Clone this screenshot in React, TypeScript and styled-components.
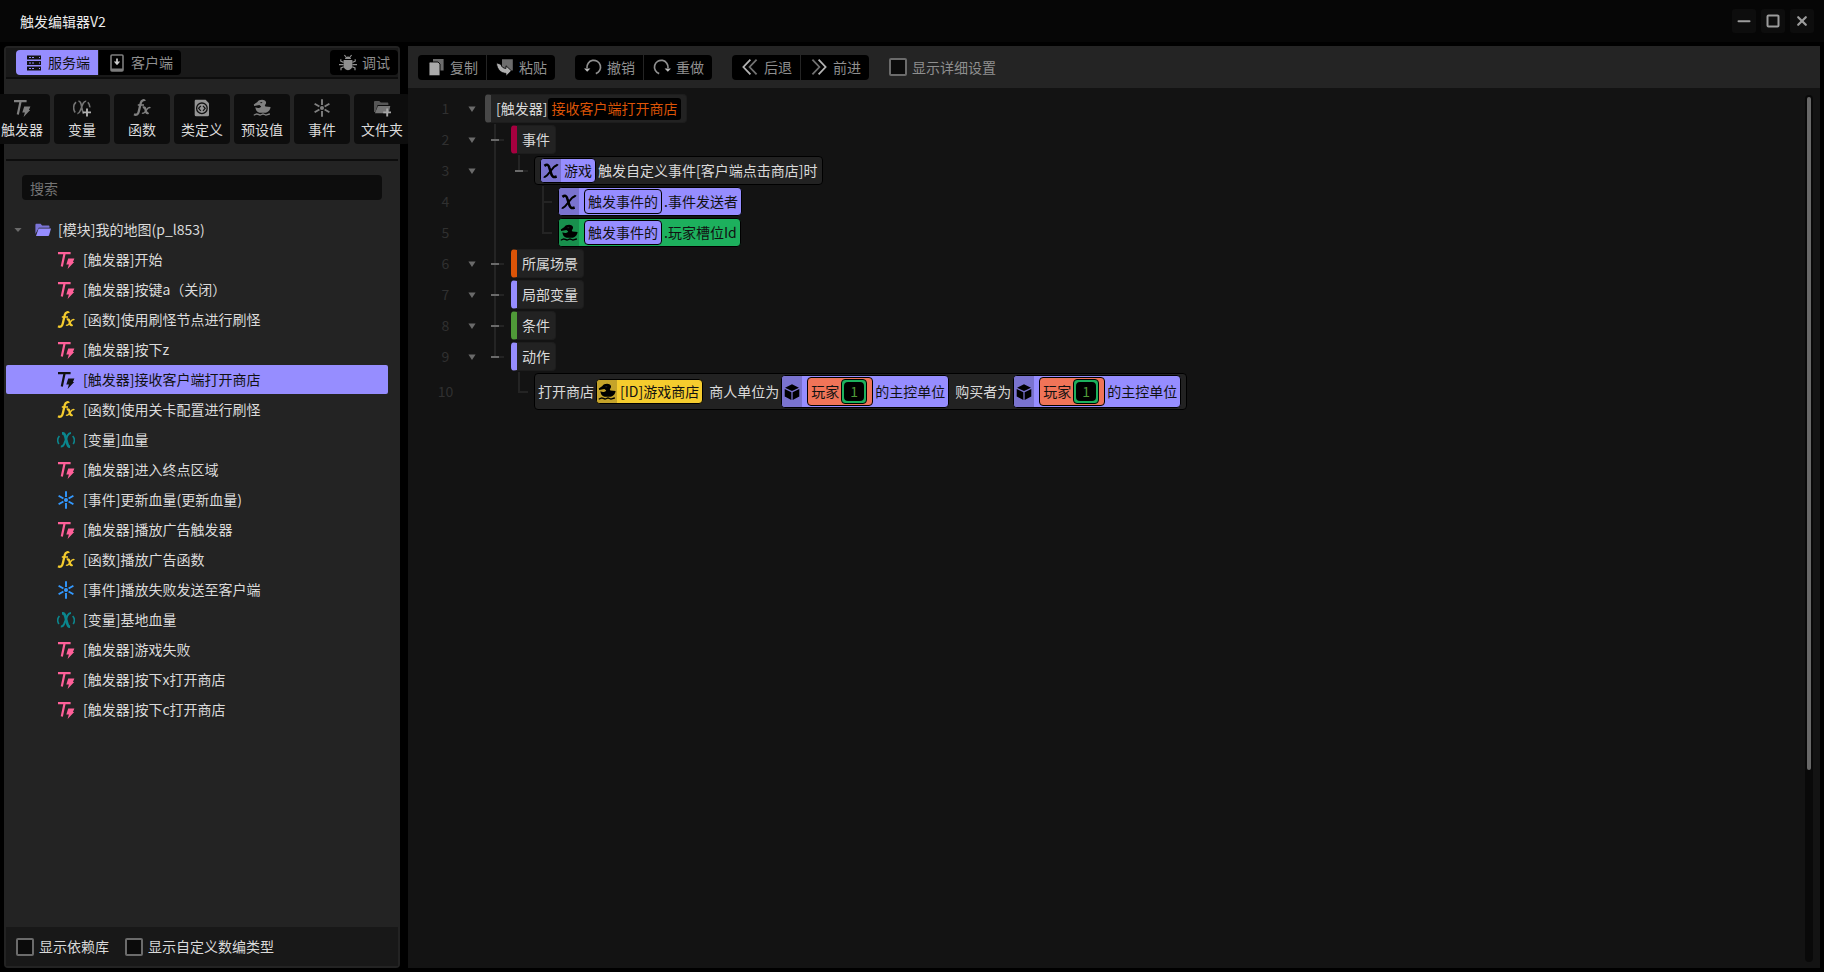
import React from 'react';
import styled, { createGlobalStyle, css } from 'styled-components';

const color = {
  accent: '#968dff',
  accentDark: '#7a73cf',
  pink: '#ff6099',
  yellow: '#f5cc2e',
  yellowDark: '#c4a32a',
  teal: '#0b868d',
  blue: '#3399ff',
  orange: '#dc5407',
  crimson: '#a5003f',
  grass: '#4f9a38',
  green: '#1db05d',
  greenDark: '#18904d',
  coral: '#f07458',
  text: '#dadada',
  muted: '#8f8f8f',
};

const Global = createGlobalStyle`
  * { box-sizing: border-box; }
  body {
    margin: 0;
    background: #000;
    color: ${color.text};
    font: 14px/19px "Noto Sans CJK SC", "Noto Sans", sans-serif;
  }
  button, input { font: inherit; color: inherit; }
  button { border: 0; padding: 0; cursor: pointer; }
  svg { display: block; flex: none; }
`;

/* ---------- icons ---------- */

type IconName =
  | 'trigger' | 'function' | 'variable' | 'variableAdd' | 'event' | 'class' | 'preset'
  | 'folderAdd' | 'folder' | 'server' | 'client' | 'bug' | 'copy' | 'paste' | 'undo'
  | 'redo' | 'back' | 'forward' | 'chi' | 'cube' | 'minus' | 'square' | 'close';

const duck = (
  <>
    <path
      d="M.8 5.400 4.400 3C5.400.9 9.600.2 11.800 1.500c1.800 1.200 1.600 3.400 0 4.700l.6 1.300 5.200.6c-.2 2.500-1.800 4.900-4.600 5.700H6.600C3.900 13 2.400 10.900 2.400 8.300c2.200 1.100 4.900.9 5.800-.8L6.400 6 1.200 7Z"
      fill="currentColor"
    />
    <path d="M.8 16c1.400 0 1.700-1 3-1s1.800 1 3.200 1 1.700-1 3-1 1.700 1 3 1 1.700-1 3.900-1" fill="none" stroke="currentColor" strokeWidth="1.400" />
    <path d="M7.400 3.600h1.800" stroke="#1c1c1c" strokeWidth="1.100" />
  </>
);

const spark = (
  <>
    <path d="M9 .3v5.600M9 12.100v5.600M1.600 4.700l4.800 2.800M11.600 10.500l4.800 2.800M16.400 4.700l-4.800 2.800M6.400 10.500l-4.800 2.800" fill="none" stroke="currentColor" strokeWidth="1.900" />
    <circle cx="9" cy="9" r="2" fill="currentColor" />
  </>
);

const drawings: Record<IconName, React.ReactNode> = {
  trigger: (
    <>
      <path d="M1 2.200h12.600M7.600 2.200 4.800 15.400" fill="none" stroke="currentColor" strokeWidth="2.200" />
      <path d="M11.200 7.600h6.200l-1.500 3.300h1.300l-6.600 7.100 1.300-4.500H9.300Z" fill="currentColor" />
    </>
  ),
  function: (
    <>
      <path d="M11.800 2c-.4-1.200-3.100-1.300-3.900 1.600L5.700 12.800c-.5 2.500-2.500 3.600-4.700 2.500" fill="none" stroke="currentColor" strokeWidth="2.300" />
      <path d="M4.800 6h6.200" stroke="currentColor" strokeWidth="1.600" />
      <path d="M9.800 8.600c1.900-.9 2.500.5 2.900 2.600.4 2.400 1 3.600 2.800 2.500" fill="none" stroke="currentColor" strokeWidth="2.300" />
      <path d="M17.400 8.800c-1.400-.9-2.800.4-4.200 2.500-1.300 2-2.700 3.700-4.200 2.700" fill="none" stroke="currentColor" strokeWidth="1.500" />
    </>
  ),
  variable: (
    <>
      <path d="M5 2.400h.9c1.400 0 1.800.9 2.400 3l1.600 6c.6 2.300 1.100 4.200 2.500 4.200h.7" fill="none" stroke="currentColor" strokeWidth="2.700" />
      <path d="M14 2.100c-1.500 0-2.600.9-3.500 2.400L7.300 12.700c-.9 2.100-1.900 3.100-3.500 2.900" fill="none" stroke="currentColor" strokeWidth="2" />
      <path d="M2.400 5C.5 7.200.4 10.600 1.900 13M15.700 5c1.900 2.200 2 5.600.5 8" fill="none" stroke="currentColor" strokeWidth="1.600" />
    </>
  ),
  variableAdd: (
    <>
      <path d="M5.400 2.200c1.700-.2 2.200.8 2.700 3l1.300 6.200c.3 1.500.7 2.700 1.200 3.300M13.200 2.300c-1.300-.2-2.300.7-3.100 2.200l-2.900 7.300c-.8 1.900-1.500 2.900-2.800 2.700M3 3.200C.1 5.900-.1 10.400 2.200 13.400M14.800 3.200c1.500 1.500 2.100 3.300 2 5.200" fill="none" stroke="#747474" strokeWidth="1.600" />
      <path d="M14 9.400v8M10 13.400h8" stroke="#b0b0b0" strokeWidth="1.900" />
    </>
  ),
  event: spark,
  class: (
    <>
      <path d="M3 .8h9.600L16 4.200v11.600a1.500 1.500 0 0 1-1.500 1.500H3.200a1.500 1.500 0 0 1-1.500-1.500V2.200C1.700 1.300 2.200.8 3 .8Z" fill="#949494" />
      <circle cx="8.900" cy="9.300" r="5.300" fill="none" stroke="#111" strokeWidth="1.300" />
      <path d="M7.800 6.800 5.600 9.300l2.200 2.500M10 6.800l2.200 2.500-2.200 2.500" fill="none" stroke="#111" strokeWidth="1.200" />
    </>
  ),
  preset: duck,
  folderAdd: (
    <>
      <path d="M1 13V3.200C1 2.400 1.400 2 2.200 2h4l1.600 1.600h6.400c.8 0 1.200.4 1.200 1.200V6H4.600L2.400 13Z" fill="#565656" />
      <path d="M4.900 7h12.400l-1.600 7.300H1.900Z" fill="#747474" />
      <path d="M14.200 9.400v8M10.200 13.400h8" stroke="#a8a8a8" strokeWidth="1.900" />
    </>
  ),
  folder: (
    <>
      <path d="M1.400 13V4c0-.8.4-1.200 1.200-1.200h4l1.500 1.700h6.200c.8 0 1.200.4 1.200 1.200v1H4.800Z" fill="#7a73d6" />
      <path d="M4.600 7.600h12.400l-1.900 6.700c-.1.500-.5.800-1 .8H2Z" fill="currentColor" />
    </>
  ),
  server: (
    <>
      <path d="M2 1.400h14v4.200H2zM2 6.900h14v4.200H2zM2 12.400h14v4.200H2z" fill="currentColor" />
      <path d="M4 3.500h2M7 3.500h2M4 9h2M7 9h2M4 14.500h2M7 14.500h2M14 3.500h1M14 9h1M14 14.500h1" stroke={color.accent} strokeWidth="1" />
    </>
  ),
  client: (
    <>
      <path d="M4 1h10c.7 0 1 .4 1 1v14c0 .7-.3 1-1 1H4c-.6 0-1-.3-1-1V2c0-.6.400-1 1-1Z" fill="none" stroke="#7c7c7c" strokeWidth="1.600" />
      <path d="M3 14.600h12V17H3z" fill="#7c7c7c" />
      <path d="M9 4.600v4" stroke="#ccc" strokeWidth="1.700" />
      <path d="M5.800 7.600h6.400L9 11.200Z" fill="#ccc" />
    </>
  ),
  bug: (
    <>
      <path d="M6 5C6 3.500 7.200 2.600 9 2.600S12 3.500 12 5ZM4.600 6h8.800v5.600c0 2.800-1.800 4.600-4.400 4.600s-4.400-1.800-4.400-4.600Z" fill="currentColor" />
      <path d="M7 3 5.400 1M11 3l1.600-2M4.600 8.400 1.800 7.200V5.200M4.600 10.600H0M4.800 12.800 2 14v2.200M13.400 8.400l2.800-1.200V5.200M13.400 10.600H18M13.200 12.800 16 14v2.200" fill="none" stroke="currentColor" strokeWidth="1.200" />
    </>
  ),
  copy: (
    <>
      <path d="M6 1h10.600v11.600H6z" fill="#6c6c6c" />
      <path d="M3.200 4H11l2 2v11.800H2V5.200C2 4.400 2.400 4 3.200 4Z" fill="#aaa" stroke="#000" strokeWidth=".9" />
    </>
  ),
  paste: (
    <>
      <path d="M6 1.200h10.800v11.400H6z" fill="#6c6c6c" />
      <path d="M.4 4.800 5 6.400c.6 2.600 2.200 3.900 5 4V7.800l5.400 5-5.400 5.400v-2.800C5 15.200 1 11.600.4 4.800Z" fill="#b0b0b0" stroke="#000" strokeWidth=".8" />
    </>
  ),
  undo: (
    <>
      <path d="M3 10A6.800 6.800 0 1 1 11.800 15.600" fill="none" stroke="currentColor" strokeWidth="1.700" />
      <path d="M0 10.400h6.400l-3.200 3.400Z" fill="#bbb" />
    </>
  ),
  redo: (
    <>
      <path d="M15 10A6.800 6.800 0 1 0 6.200 15.600" fill="none" stroke="currentColor" strokeWidth="1.700" />
      <path d="M18 10.400h-6.400l3.200 3.400Z" fill="#bbb" />
    </>
  ),
  back: (
    <>
      <path d="M9.400 1.600 2.400 9l7 7.400" fill="none" stroke="#b4b4b4" strokeWidth="1.800" />
      <path d="M15.600 1.600 8.600 9l7 7.400" fill="none" stroke="#707070" strokeWidth="1.800" />
    </>
  ),
  forward: (
    <>
      <path d="M2.400 1.600 9.400 9l-7 7.400" fill="none" stroke="#707070" strokeWidth="1.800" />
      <path d="M8.600 1.600l7 7.400-7 7.400" fill="none" stroke="#b4b4b4" strokeWidth="1.800" />
    </>
  ),
  chi: (
    <>
      <path d="M1.600 3.200C4.600 1 6.200 2 7 4.800l2.300 7.400c.8 2.900 2.300 4.400 6.100 3" fill="none" stroke="currentColor" strokeWidth="2.900" />
      <path d="M16.600 1.400c-1 1.900-2.900 1.400-4.200 3.100L5 13.400c-1.200 1.500-2.900 1.200-3.700 3.200" fill="none" stroke="currentColor" strokeWidth="2.200" />
    </>
  ),
  cube: (
    <>
      <path d="m9 .2 7.800 3.900L9 8 1.200 4.100ZM.8 5.600l7.500 3.700v8.600L.8 14ZM17.200 5.600l-7.500 3.700v8.600l7.500-3.900Z" fill="currentColor" />
    </>
  ),
  minus: <path d="M3.500 9.200h11" stroke="currentColor" strokeWidth="2" strokeLinecap="round" />,
  square: <rect x="3.500" y="3.500" width="11" height="11" rx="1" fill="none" stroke="currentColor" strokeWidth="2" />,
  close: <path d="m5.200 5.200 7.600 7.600M12.800 5.200l-7.600 7.600" stroke="currentColor" strokeWidth="2.200" strokeLinecap="round" />,
};

const Icon = ({ name, size = 18 }: { name: IconName; size?: number }) => (
  <svg width={size} height={size} viewBox="0 0 18 18" aria-hidden="true">
    {drawings[name]}
  </svg>
);

const Caret = ({ flat }: { flat?: boolean }) => (
  <svg width="8" height="6" viewBox="0 0 8 6" aria-hidden="true">
    <path d={flat ? 'M.4 1h7.200L4 5Z' : 'M.4.400h7.200L4 6Z'} fill="currentColor" />
  </svg>
);

/* ---------- window frame ---------- */

const Window = styled.div`
  min-height: 100vh;
  display: flex;
  flex-direction: column;
`;

const TitleBar = styled.header`
  height: 42px;
  padding: 0 10px 0 20px;
  display: flex;
  align-items: center;
  justify-content: space-between;
  background: #060606;
`;

const Title = styled.h1`
  margin: 0;
  font-size: 14px;
  font-weight: 400;
  color: #ececec;
`;

const WindowControls = styled.div`
  display: flex;
  gap: 5px;
`;

const WindowButton = styled.button`
  width: 24px;
  height: 24px;
  display: grid;
  place-items: center;
  border-radius: 3px;
  background: #0d0d0d;
  color: #9c9c9c;
`;

const Workspace = styled.div`
  flex: 1;
  display: grid;
  grid-template-columns: 396px minmax(0, 1fr);
  gap: 8px;
  padding: 4px;
`;

/* ---------- shared controls ---------- */

const ButtonGroup = styled.div`
  display: flex;
  gap: 1px;
  border-radius: 4px;
  overflow: hidden;
`;

const ToolButton = styled.button<{ $active?: boolean }>`
  height: 25px;
  padding: 0 8px 0 9px;
  display: flex;
  align-items: center;
  gap: 5px;
  background: ${(p) => (p.$active ? color.accent : '#000')};
  color: ${(p) => (p.$active ? '#111' : color.muted)};
`;

const CheckLabel = styled.label<{ $muted?: boolean }>`
  display: flex;
  align-items: center;
  gap: 5px;
  color: ${(p) => (p.$muted ? color.muted : color.text)};
`;

const CheckBox = styled.input.attrs({ type: 'checkbox' })`
  appearance: none;
  width: 18px;
  height: 18px;
  margin: 0;
  border: 2px solid #6b6b6b;
  border-radius: 2px;
  background: #0b0b0b;
  &:checked { background: ${color.accent}; }
`;

/* ---------- sidebar ---------- */

const Sidebar = styled.aside`
  display: flex;
  flex-direction: column;
  border: 2px solid #232323;
  border-radius: 4px;
  background: #232323;
`;

const SideHeader = styled.div`
  height: 31px;
  padding: 2px 0 0 10px;
  display: flex;
  align-items: flex-start;
  justify-content: space-between;
  background: #191919;
  border-bottom: 2px solid #0d0d0d;
`;

const CreateBar = styled.div`
  height: 82px;
  display: flex;
  align-items: center;
  justify-content: center;
  gap: 4px;
  border-bottom: 2px solid #0d0d0d;
`;

const CreateButton = styled.button`
  flex: none;
  width: 56px;
  height: 50px;
  padding: 5px 0;
  display: flex;
  flex-direction: column;
  align-items: center;
  gap: 3px;
  white-space: nowrap;
  border-radius: 4px;
  background: #0d0d0d;
  svg { color: #808080; }
`;

const SearchInput = styled.input.attrs({ type: 'text' })`
  height: 25px;
  margin: 14px 16px 0;
  padding: 0 8px;
  border: 0;
  border-radius: 4px;
  background: #0d0d0d;
  &::placeholder { color: #747474; opacity: 1; }
`;

const Tree = styled.ul`
  flex: 1;
  margin: 15px 10px 0 0;
  padding: 0;
  list-style: none;
`;

const TreeRow = styled.li<{ $selected?: boolean; $root?: boolean }>`
  height: 29px;
  margin-bottom: 1px;
  padding-left: ${(p) => (p.$root ? '8px' : '51px')};
  display: flex;
  align-items: center;
  gap: ${(p) => (p.$root ? '6px' : '8px')};
  border-radius: 2px;
  ${(p) => p.$selected && css`
    background: ${color.accent};
    color: #111;
  `}
`;

const TreeCaret = styled.span`
  width: 14px;
  color: #6a6a6a;
`;

const Tint = styled.span<{ $color: string }>`
  color: ${(p) => p.$color};
`;

const SideFooter = styled.footer`
  height: 39px;
  padding: 0 10px;
  display: flex;
  align-items: center;
  gap: 16px;
  background: #181818;
`;

/* ---------- editor ---------- */

const Editor = styled.main`
  display: flex;
  flex-direction: column;
  background: #131313;
`;

const Toolbar = styled.div`
  height: 42px;
  padding: 0 10px;
  display: flex;
  align-items: center;
  gap: 20px;
  background: #242424;
`;

const EditorBody = styled.div`
  flex: 1;
  display: flex;
  justify-content: space-between;
  padding: 5px 7px 6px 18px;
`;

const Lines = styled.ol`
  flex: 1;
  min-width: 0;
  margin: 0;
  padding: 0;
  list-style: none;
`;

const Line = styled.li<{ $tall?: boolean }>`
  height: ${(p) => (p.$tall ? '39px' : '31px')};
  display: flex;
  align-items: center;
  white-space: nowrap;
`;

const LineNo = styled.span`
  width: 39px;
  text-align: center;
  color: #303030;
`;

const Fold = styled.span`
  width: 14px;
  margin-right: 6px;
  display: grid;
  place-items: center;
  color: #6a6a6a;
`;

const rail = 'linear-gradient(#242424, #242424) no-repeat';
const guides = {
  none: 'none',
  pass: `${rail} 8px 0 / 2px 100%`,
  tee: `${rail} 8px 0 / 2px 100%, ${rail} 8px 50% / 10px 2px`,
  elbow: `${rail} 8px 0 / 2px 50%, ${rail} 8px 50% / 10px 2px`,
};
const dash = 'linear-gradient(#6a6a6a, #6a6a6a) no-repeat 5px 50% / 8px 2px, ';

const Guide = styled.span<{ $kind: keyof typeof guides; $dash?: boolean }>`
  align-self: stretch;
  width: 24px;
  background: ${(p) => (p.$dash ? dash : '') + guides[p.$kind]};
  ${Fold} + & { margin-left: 1px; }
`;

const Heading = styled.span<{ $color: string }>`
  height: 29px;
  padding: 0 5px;
  display: flex;
  align-items: center;
  border: 1px solid #1d1d1d;
  border-left: 6px solid ${(p) => p.$color};
  border-radius: 4px;
  background: #222;
  ${Guide} + & { margin-left: 1px; }
`;

const TriggerName = styled.span`
  height: 22px;
  margin-left: 1px;
  padding: 1px 4px 2px 3px;
  border-radius: 3px;
  background: #000;
  color: ${color.orange};
`;

const Statement = styled.span<{ $lead: number }>`
  padding: 1px 5px 1px ${(p) => p.$lead}px;
  display: flex;
  align-items: center;
  gap: 2px;
  border: 1px solid #000;
  border-radius: 4px;
  background: #222;
`;

const Chip = styled.span<{ $bg: string }>`
  min-height: 25px;
  padding-right: 3px;
  display: flex;
  align-items: center;
  gap: 2px;
  border: 1px solid #000;
  border-radius: 4px;
  overflow: hidden;
  background: ${(p) => p.$bg};
  color: #111;
`;

const ChipIcon = styled.span<{ $bg: string; $wide?: boolean }>`
  align-self: stretch;
  width: 20px;
  margin-right: ${(p) => (p.$wide ? '3px' : '1px')};
  display: grid;
  place-items: center;
  background: ${(p) => p.$bg};
  color: #000;
`;

const Nested = styled(Chip)`
  margin: 1px 0;
  padding: 0 3px;
`;

const Slot = styled(Nested)`
  margin-right: 2px;
  padding: 2px;
`;

const SlotValue = styled.span`
  width: 20px;
  height: 19px;
  text-align: center;
  border-radius: 4px;
  background: #000;
  color: ${color.grass};
`;

const Phrase = styled.span`
  margin-left: 4px;
`;

const ScrollTrack = styled.div`
  width: 8px;
  margin-top: 2px;
  padding: 2px;
  border-radius: 4px;
  background: #090909;
`;

const ScrollThumb = styled.div`
  height: 78%;
  border-radius: 2px;
  background: #686868;
`;

/* ---------- data ---------- */

const createItems: { icon: IconName; label: string }[] = [
  { icon: 'trigger', label: '触发器' },
  { icon: 'variableAdd', label: '变量' },
  { icon: 'function', label: '函数' },
  { icon: 'class', label: '类定义' },
  { icon: 'preset', label: '预设值' },
  { icon: 'event', label: '事件' },
  { icon: 'folderAdd', label: '文件夹' },
];

const kinds = {
  触发器: { icon: 'trigger', color: color.pink },
  函数: { icon: 'function', color: color.yellow },
  变量: { icon: 'variable', color: color.teal },
  事件: { icon: 'event', color: color.blue },
} as const;

const treeItems: { kind: keyof typeof kinds; name: string; selected?: boolean }[] = [
  { kind: '触发器', name: '开始' },
  { kind: '触发器', name: '按键a（关闭）' },
  { kind: '函数', name: '使用刷怪节点进行刷怪' },
  { kind: '触发器', name: '按下z' },
  { kind: '触发器', name: '接收客户端打开商店', selected: true },
  { kind: '函数', name: '使用关卡配置进行刷怪' },
  { kind: '变量', name: '血量' },
  { kind: '触发器', name: '进入终点区域' },
  { kind: '事件', name: '更新血量(更新血量)' },
  { kind: '触发器', name: '播放广告触发器' },
  { kind: '函数', name: '播放广告函数' },
  { kind: '事件', name: '播放失败发送至客户端' },
  { kind: '变量', name: '基地血量' },
  { kind: '触发器', name: '游戏失败' },
  { kind: '触发器', name: '按下x打开商店' },
  { kind: '触发器', name: '按下c打开商店' },
];

const toolGroups: { icon: IconName; label: string }[][] = [
  [{ icon: 'copy', label: '复制' }, { icon: 'paste', label: '粘贴' }],
  [{ icon: 'undo', label: '撤销' }, { icon: 'redo', label: '重做' }],
  [{ icon: 'back', label: '后退' }, { icon: 'forward', label: '前进' }],
];

const sections = [
  { no: 6, label: '所属场景', color: color.orange },
  { no: 7, label: '局部变量', color: color.accent },
  { no: 8, label: '条件', color: color.grass },
  { no: 9, label: '动作', color: color.accent },
];

/* ---------- views ---------- */

const Gutter = ({ no, fold }: { no: number; fold?: boolean }) => (
  <>
    <LineNo>{no}</LineNo>
    <Fold>{fold && <Caret />}</Fold>
  </>
);

const SectionLine = ({ no, label, tone, last }: { no: number; label: string; tone: string; last?: boolean }) => (
  <Line>
    <Gutter no={no} fold />
    <Guide $kind={last ? 'elbow' : 'tee'} $dash />
    <Heading $color={tone}>{label}</Heading>
  </Line>
);

const PlayerUnit = () => (
  <Chip $bg={color.accent}>
    <ChipIcon $bg={color.accentDark} $wide><Icon name="cube" size={16} /></ChipIcon>
    <Nested $bg={color.coral}>
      玩家
      <Slot $bg={color.green}><SlotValue>1</SlotValue></Slot>
    </Nested>
    的主控单位
  </Chip>
);

const SidePanel = () => (
  <Sidebar>
    <SideHeader>
      <ButtonGroup>
        <ToolButton $active><Icon name="server" />服务端</ToolButton>
        <ToolButton><Icon name="client" />客户端</ToolButton>
      </ButtonGroup>
      <ButtonGroup>
        <ToolButton><Icon name="bug" />调试</ToolButton>
      </ButtonGroup>
    </SideHeader>
    <CreateBar>
      {createItems.map((item) => (
        <CreateButton key={item.label}><Icon name={item.icon} />{item.label}</CreateButton>
      ))}
    </CreateBar>
    <SearchInput placeholder="搜索" aria-label="搜索" />
    <Tree>
      <TreeRow $root>
        <TreeCaret><Caret flat /></TreeCaret>
        <Tint $color={color.accent}><Icon name="folder" /></Tint>
        [模块]我的地图(p_l853)
      </TreeRow>
      {treeItems.map((item) => (
        <TreeRow key={item.kind + item.name} $selected={item.selected}>
          <Tint $color={item.selected ? '#111' : kinds[item.kind].color}>
            <Icon name={kinds[item.kind].icon} />
          </Tint>
          [{item.kind}]{item.name}
        </TreeRow>
      ))}
    </Tree>
    <SideFooter>
      <CheckLabel><CheckBox />显示依赖库</CheckLabel>
      <CheckLabel><CheckBox />显示自定义数编类型</CheckLabel>
    </SideFooter>
  </Sidebar>
);

const EditorPanel = () => (
  <Editor>
    <Toolbar>
      {toolGroups.map((group) => (
        <ButtonGroup key={group[0].label}>
          {group.map((tool) => (
            <ToolButton key={tool.label}><Icon name={tool.icon} />{tool.label}</ToolButton>
          ))}
        </ButtonGroup>
      ))}
      <CheckLabel $muted><CheckBox />显示详细设置</CheckLabel>
    </Toolbar>
    <EditorBody>
      <Lines>
        <Line>
          <Gutter no={1} fold />
          <Heading $color="#484848">[触发器]<TriggerName>接收客户端打开商店</TriggerName></Heading>
        </Line>
        <SectionLine no={2} label="事件" tone={color.crimson} />
        <Line>
          <Gutter no={3} fold />
          <Guide $kind="pass" />
          <Guide $kind="elbow" $dash />
          <Statement $lead={5}>
            <Chip $bg={color.accent}>
              <ChipIcon $bg={color.accentDark}><Icon name="chi" size={16} /></ChipIcon>
              游戏
            </Chip>
            触发自定义事件[客户端点击商店]时
          </Statement>
        </Line>
        <Line>
          <Gutter no={4} />
          <Guide $kind="pass" />
          <Guide $kind="none" />
          <Guide $kind="tee" />
          <Chip $bg={color.accent}>
            <ChipIcon $bg={color.accentDark} $wide><Icon name="chi" size={16} /></ChipIcon>
            <Nested $bg={color.accent}>触发事件的</Nested>
            .事件发送者
          </Chip>
        </Line>
        <Line>
          <Gutter no={5} />
          <Guide $kind="pass" />
          <Guide $kind="none" />
          <Guide $kind="elbow" />
          <Chip $bg={color.green}>
            <ChipIcon $bg={color.greenDark} $wide><Icon name="preset" /></ChipIcon>
            <Nested $bg={color.accent}>触发事件的</Nested>
            .玩家槽位Id
          </Chip>
        </Line>
        {sections.map((s, i) => (
          <SectionLine key={s.no} no={s.no} label={s.label} tone={s.color} last={i === sections.length - 1} />
        ))}
        <Line $tall>
          <Gutter no={10} />
          <Guide $kind="none" />
          <Guide $kind="elbow" />
          <Statement $lead={3}>
            打开商店
            <Chip $bg={color.yellow}>
              <ChipIcon $bg={color.yellowDark}><Icon name="preset" /></ChipIcon>
              [ID]游戏商店
            </Chip>
            <Phrase>商人单位为</Phrase>
            <PlayerUnit />
            <Phrase>购买者为</Phrase>
            <PlayerUnit />
          </Statement>
        </Line>
      </Lines>
      <ScrollTrack><ScrollThumb /></ScrollTrack>
    </EditorBody>
  </Editor>
);

const App = () => (
  <>
    <Global />
    <Window>
      <TitleBar>
        <Title>触发编辑器V2</Title>
        <WindowControls>
          <WindowButton aria-label="最小化"><Icon name="minus" /></WindowButton>
          <WindowButton aria-label="最大化"><Icon name="square" /></WindowButton>
          <WindowButton aria-label="关闭"><Icon name="close" /></WindowButton>
        </WindowControls>
      </TitleBar>
      <Workspace>
        <SidePanel />
        <EditorPanel />
      </Workspace>
    </Window>
  </>
);

export default App;
